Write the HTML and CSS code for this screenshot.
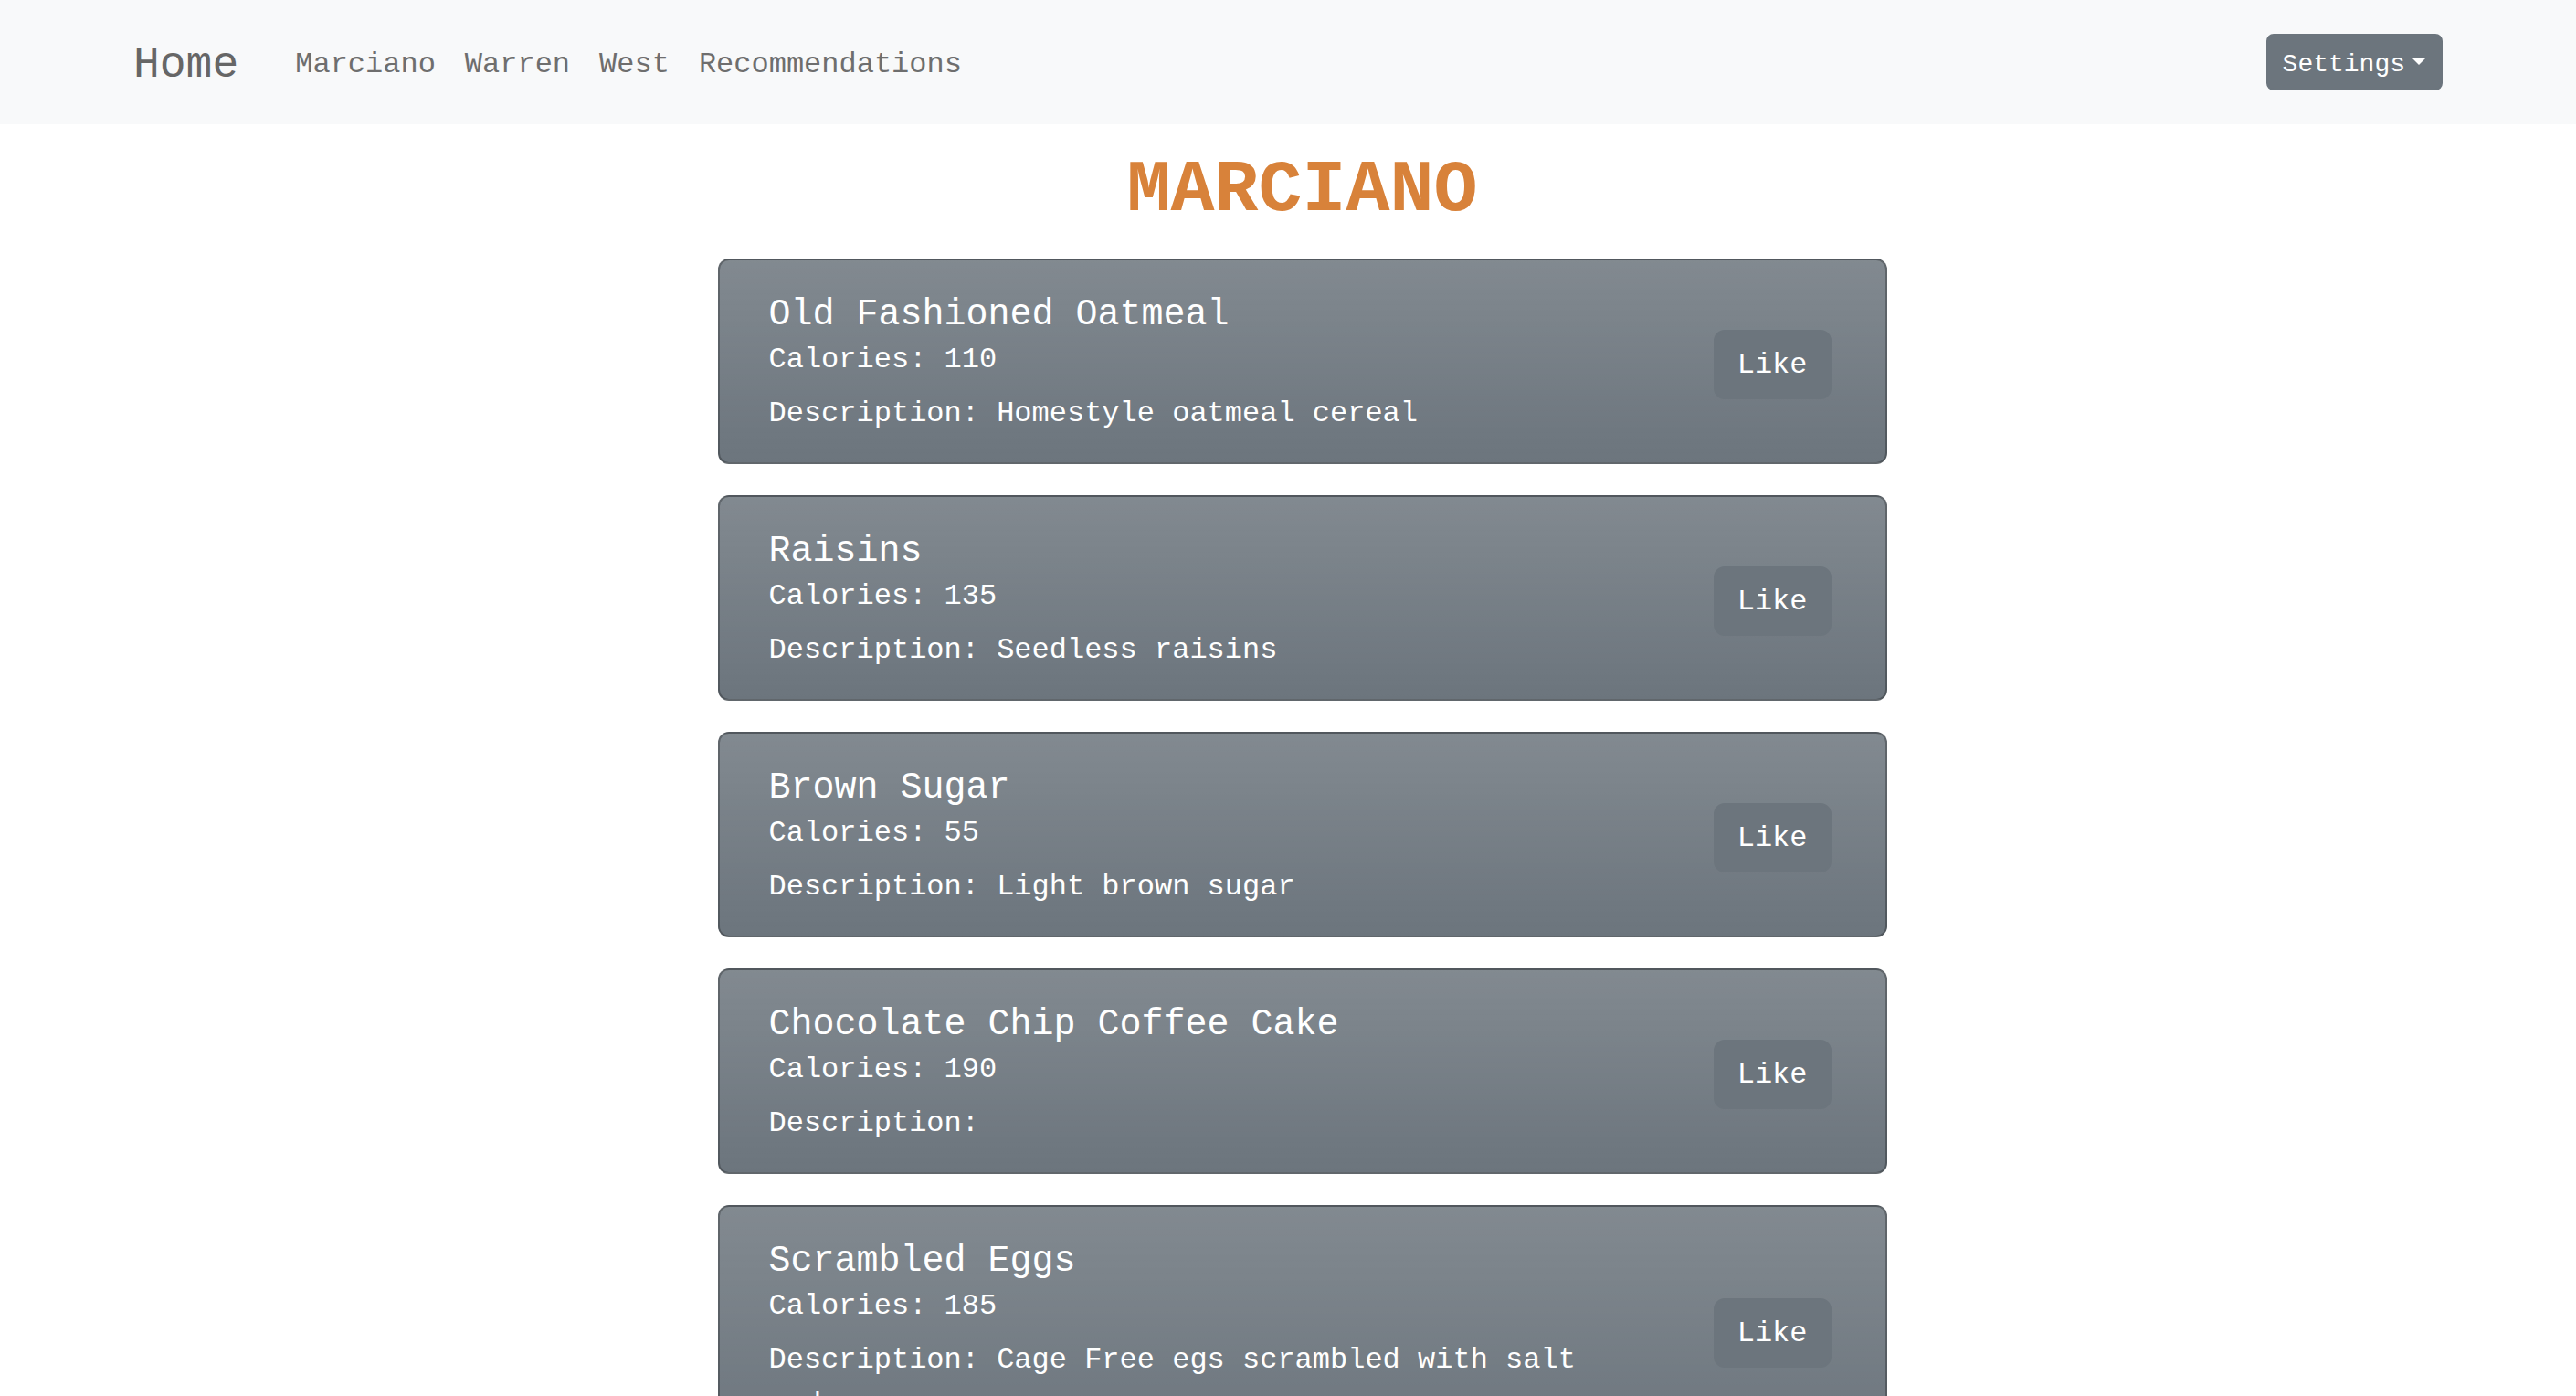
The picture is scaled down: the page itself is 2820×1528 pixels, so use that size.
FILE: index.html
```html
<!DOCTYPE html>
<html lang="en">

<head>
  <meta charset="UTF-8" />
  <meta name="viewport" content="width=device-width, initial-scale=1.0" />
  <title>Marciano</title>
  <link rel="stylesheet" href="styles.css">
</head>

<body>
  <!-- 顶部导航 -->
  <nav class="navbar">
    <a class="brand" href="#">Home</a>
    <ul class="nav-links">
      <li><a href="#">Marciano</a></li>
      <li><a href="#">Warren</a></li>
      <li><a href="#">West</a></li>
      <li><a href="#">Recommendations</a></li>
    </ul>
    <button class="btn-settings">Settings<span class="caret"></span></button>
  </nav>

  <main class="main">
    <h1 class="hall-title">MARCIANO</h1>

    <div class="card">
      <div class="card-text">
        <h5 class="food-name">Old Fashioned Oatmeal</h5>
        <p class="calories">Calories: 110</p>
        <p class="desc">Description: Homestyle oatmeal cereal</p>
      </div>
      <button class="btn-like">Like</button>
    </div>

    <div class="card">
      <div class="card-text">
        <h5 class="food-name">Raisins</h5>
        <p class="calories">Calories: 135</p>
        <p class="desc">Description: Seedless raisins</p>
      </div>
      <button class="btn-like">Like</button>
    </div>

    <div class="card">
      <div class="card-text">
        <h5 class="food-name">Brown Sugar</h5>
        <p class="calories">Calories: 55</p>
        <p class="desc">Description: Light brown sugar</p>
      </div>
      <button class="btn-like">Like</button>
    </div>

    <div class="card">
      <div class="card-text">
        <h5 class="food-name">Chocolate Chip Coffee Cake</h5>
        <p class="calories">Calories: 190</p>
        <p class="desc">Description: </p>
      </div>
      <button class="btn-like">Like</button>
    </div>

    <div class="card">
      <div class="card-text">
        <h5 class="food-name">Scrambled Eggs</h5>
        <p class="calories">Calories: 185</p>
        <p class="desc">Description: Cage Free egs scrambled with salt and pepper</p>
      </div>
      <button class="btn-like">Like</button>
    </div>
  </main>
</body>

</html>
```

FILE: styles.css
```css
* {
  margin: 0;
  padding: 0;
  box-sizing: border-box;
}

body {
  font-family: "Courier New", "Liberation Mono", monospace;
  background: #fff;
}

ul {
  list-style: none;
}

a {
  text-decoration: none;
}

/* 导航栏 */
.navbar {
  height: 136px;
  background: #f8f9fa;
  display: flex;
  align-items: center;
  padding: 0 146px 0 146px;
}

.navbar .brand {
  font-size: 48px;
  line-height: 72px;
  padding-top: 6px;
  color: #666;
  margin-right: 46px;
}

.nav-links {
  display: flex;
  flex: 1;
}

.nav-links a {
  display: block;
  padding: 6px 16px 0;
  font-size: 32px;
  line-height: 48px;
  color: #6e6e6e;
}

.btn-settings {
  height: 62px;
  padding: 11px 16px 5px;
  border: 2px solid #6c757d;
  border-radius: 8px;
  background: #6c757d;
  color: #fff;
  font: 28px/42px "Courier New", "Liberation Mono", monospace;
  display: flex;
  align-items: center;
}

.btn-settings .caret {
  margin-left: 7px;
  border-top: 8px solid #fff;
  border-left: 8px solid transparent;
  border-right: 8px solid transparent;
  margin-top: -8px;
}

/* 内容 */
.main {
  display: flex;
  flex-direction: column;
  align-items: center;
  padding-left: 31px;
  padding-top: 25px;
}

.hall-title {
  font-size: 80px;
  line-height: 96px;
  font-weight: bold;
  color: #d8823a;
  margin-bottom: 26px;
}

.card {
  width: 1280px;
  display: flex;
  align-items: center;
  justify-content: space-between;
  padding: 36px 59px 29px 54px;
  margin-bottom: 34px;
  border: 2px solid rgba(0, 0, 0, 0.25);
  border-radius: 12px;
  background: #6c757d linear-gradient(180deg, rgba(255, 255, 255, 0.15), rgba(255, 255, 255, 0));
  color: #fff;
}

.card-text {
  width: 900px;
}

.food-name {
  font-size: 40px;
  line-height: 48px;
  font-weight: normal;
  margin-bottom: 1px;
}

.calories {
  font-size: 32px;
  line-height: 48px;
  margin-bottom: 11px;
}

.desc {
  font-size: 32px;
  line-height: 48px;
}

.btn-like {
  padding: 13px 24px 11px;
  border: 2px solid #6c757d;
  border-radius: 12px;
  background: #6c757d;
  color: #fff;
  font: 32px/48px "Courier New", "Liberation Mono", monospace;
  cursor: pointer;
}
```
